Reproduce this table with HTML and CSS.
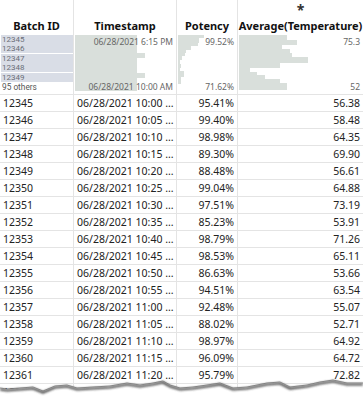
FILE: index.html
```html
<!DOCTYPE html>
<html>
<head>
<meta charset="utf-8">
<link rel="stylesheet" href="styles.css">
</head>
<body>
<div class="table">
  <div class="row head">
    <div class="cell"><span class="title">Batch ID</span></div>
    <div class="cell"><span class="title">Timestamp</span></div>
    <div class="cell"><span class="title">Potency</span></div>
    <div class="cell stack"><span class="star">*</span><span class="title">Average(Temperature)</span></div>
  </div>
  <div class="row summary">
    <div class="cell sum">
      <div class="cats">
        <div class="cat">12345</div>
        <div class="cat">12346</div>
        <div class="cat">12347</div>
        <div class="cat">12348</div>
        <div class="cat">12349</div>
        <div class="cat other">95 others</div>
      </div>
    </div>
    <div class="cell sum">
      <div class="bars">
        <div class="bar" style="height:18px;width:62px"></div>
        <div class="bar" style="height:5px;width:70px"></div>
        <div class="bar" style="height:15px;width:62px"></div>
        <div class="bar" style="height:5px;width:70px"></div>
        <div class="bar" style="height:13px;width:62px"></div>
      </div>
      <span class="lbl top">06/28/2021 6:15 PM</span>
      <span class="lbl bottom">06/28/2021 10:00 AM</span>
    </div>
    <div class="cell sum">
      <div class="bars">
        <div class="bar" style="height:3px;width:26px"></div>
        <div class="bar" style="height:5px;width:21px"></div>
        <div class="bar" style="height:3px;width:20px"></div>
        <div class="bar" style="height:4px;width:13px"></div>
        <div class="bar" style="height:3px;width:8px"></div>
        <div class="bar" style="height:3px;width:7px"></div>
        <div class="bar" style="height:4px;width:4px"></div>
        <div class="bar" style="height:4px;width:2px"></div>
        <div class="bar" style="height:4px;width:3px"></div>
        <div class="bar" style="height:3px;width:2px"></div>
        <div class="bar" style="height:6px;width:6px"></div>
        <div class="bar" style="height:7px;width:3px"></div>
      </div>
      <span class="lbl top">99.52%</span>
      <span class="lbl bottom">71.62%</span>
    </div>
    <div class="cell sum">
      <div class="bars">
        <div class="bar" style="height:5px;width:48px"></div>
        <div class="bar" style="height:5px;width:58px"></div>
        <div class="bar" style="height:4px;width:43px"></div>
        <div class="bar" style="height:4px;width:51px"></div>
        <div class="bar" style="height:4px;width:53px"></div>
        <div class="bar" style="height:6px;width:69px"></div>
        <div class="bar" style="height:5px;width:41px"></div>
        <div class="bar" style="height:4px;width:11px"></div>
        <div class="bar" style="height:3px;width:18px"></div>
        <div class="bar" style="height:4px;width:26px"></div>
        <div class="bar" style="height:4px;width:41px"></div>
        <div class="bar" style="height:7px;width:48px"></div>
      </div>
      <span class="lbl top">75.3</span>
      <span class="lbl bottom">52</span>
    </div>
  </div>

  <div class="row"><div class="cell id">12345</div><div class="cell ts">06/28/2021 10:00 ...</div><div class="cell num">95.41%</div><div class="cell num">56.38</div></div>
  <div class="row"><div class="cell id">12346</div><div class="cell ts">06/28/2021 10:05 ...</div><div class="cell num">99.40%</div><div class="cell num">58.48</div></div>
  <div class="row"><div class="cell id">12347</div><div class="cell ts">06/28/2021 10:10 ...</div><div class="cell num">98.98%</div><div class="cell num">64.35</div></div>
  <div class="row"><div class="cell id">12348</div><div class="cell ts">06/28/2021 10:15 ...</div><div class="cell num">89.30%</div><div class="cell num">69.90</div></div>
  <div class="row"><div class="cell id">12349</div><div class="cell ts">06/28/2021 10:20 ...</div><div class="cell num">88.48%</div><div class="cell num">56.61</div></div>
  <div class="row"><div class="cell id">12350</div><div class="cell ts">06/28/2021 10:25 ...</div><div class="cell num">99.04%</div><div class="cell num">64.88</div></div>
  <div class="row"><div class="cell id">12351</div><div class="cell ts">06/28/2021 10:30 ...</div><div class="cell num">97.51%</div><div class="cell num">73.19</div></div>
  <div class="row"><div class="cell id">12352</div><div class="cell ts">06/28/2021 10:35 ...</div><div class="cell num">85.23%</div><div class="cell num">53.91</div></div>
  <div class="row"><div class="cell id">12353</div><div class="cell ts">06/28/2021 10:40 ...</div><div class="cell num">98.79%</div><div class="cell num">71.26</div></div>
  <div class="row"><div class="cell id">12354</div><div class="cell ts">06/28/2021 10:45 ...</div><div class="cell num">98.53%</div><div class="cell num">65.11</div></div>
  <div class="row"><div class="cell id">12355</div><div class="cell ts">06/28/2021 10:50 ...</div><div class="cell num">86.63%</div><div class="cell num">53.66</div></div>
  <div class="row"><div class="cell id">12356</div><div class="cell ts">06/28/2021 10:55 ...</div><div class="cell num">94.51%</div><div class="cell num">63.54</div></div>
  <div class="row"><div class="cell id">12357</div><div class="cell ts">06/28/2021 11:00 ...</div><div class="cell num">92.48%</div><div class="cell num">55.07</div></div>
  <div class="row"><div class="cell id">12358</div><div class="cell ts">06/28/2021 11:05 ...</div><div class="cell num">88.02%</div><div class="cell num">52.71</div></div>
  <div class="row"><div class="cell id">12359</div><div class="cell ts">06/28/2021 11:10 ...</div><div class="cell num">98.97%</div><div class="cell num">64.92</div></div>
  <div class="row"><div class="cell id">12360</div><div class="cell ts">06/28/2021 11:15 ...</div><div class="cell num">96.09%</div><div class="cell num">64.72</div></div>
  <div class="row"><div class="cell id">12361</div><div class="cell ts">06/28/2021 11:20 ...</div><div class="cell num">95.79%</div><div class="cell num">72.82</div></div>
  <div class="row"><div class="cell id">12362</div><div class="cell ts">06/28/2021 11:25 ...</div><div class="cell num">97.12%</div><div class="cell num">61.40</div></div>
</div>

<svg class="tear" width="363" height="26" viewBox="0 0 363 26">
  <defs>
    <filter id="sh" x="-5%" y="-50%" width="110%" height="200%">
      <feGaussianBlur stdDeviation="0.9"/>
    </filter>
  </defs>
  <path d="M0 14 L7 15 L20 14 L33 13 L43 17 L55 12 L67 11 L77 14 L93 13 L110 12 L127 9 L140 11 L153 9 L163 7 L170 11 L180 14 L193 13 L207 11 L220 9 L233 14 L247 13 L267 9 L280 8 L290 13 L307 11 L320 8 L333 6 L347 9 L363 9 L363 26 L0 26 Z" fill="#fff"/>
  <path d="M0 15.5 L7 16.5 L20 15.5 L33 14.5 L43 18.5 L55 13.5 L67 12.5 L77 15.5 L93 14.5 L110 13.5 L127 10.5 L140 12.5 L153 10.5 L163 8.5 L170 12.5 L180 15.5 L193 14.5 L207 12.5 L220 10.5 L233 15.5 L247 14.5 L267 10.5 L280 9.5 L290 14.5 L307 12.5 L320 9.5 L333 7.5 L347 10.5 L363 10.5" fill="none" stroke="#444" stroke-width="2.2" filter="url(#sh)"/>
  <path d="M0 14 L7 15 L20 14 L33 13 L43 17 L55 12 L67 11 L77 14 L93 13 L110 12 L127 9 L140 11 L153 9 L163 7 L170 11 L180 14 L193 13 L207 11 L220 9 L233 14 L247 13 L267 9 L280 8 L290 13 L307 11 L320 8 L333 6 L347 9 L363 9" fill="none" stroke="#777" stroke-width="0.8"/>
</svg>
</body>
</html>
```

FILE: styles.css
```css
html, body {
  margin: 0;
  padding: 0;
  background: #fff;
}
body {
  width: 363px;
  height: 400px;
  overflow: hidden;
  position: relative;
  font-family: "Noto Sans", "Open Sans", sans-serif;
  color: #222;
}
.table {
  width: 363px;
}
.row {
  display: grid;
  grid-template-columns: 74px 103px 61px 125px;
  height: 17px;
  border-bottom: 1px solid #e4e4e4;
  box-sizing: border-box;
}
.cell {
  border-right: 1px solid #e4e4e4;
  box-sizing: border-box;
  font-size: 10.5px;
  line-height: 16px;
  white-space: nowrap;
  overflow: hidden;
}
.cell:last-child {
  border-right: none;
}
.id {
  padding-left: 3px;
}
.ts {
  padding-left: 3px;
}
.num {
  text-align: right;
  padding-right: 3px;
}
.head {
  height: 33px;
  border-bottom: none;
}
.head .cell {
  display: flex;
  flex-direction: column;
  justify-content: flex-end;
  align-items: center;
  padding-bottom: 1px;
}
.title {
  font-weight: 700;
  font-size: 11px;
  line-height: 13px;
  color: #111;
}
.star {
  font-weight: 700;
  font-size: 14px;
  line-height: 10px;
  margin-bottom: 4px;
  color: #333;
}
.summary {
  height: 62px;
}
.sum {
  position: relative;
  padding: 2px 1px 0 1px;
}
.cats {
  display: flex;
  flex-direction: column;
  gap: 0.4px;
}
.cat {
  height: 9px;
  width: 71px;
  background: #d9dde6;
  font-family: Roboto, "Noto Sans", sans-serif;
  font-size: 8px;
  line-height: 9px;
  color: #6a6e78;
  padding-left: 1px;
}
.cat.other {
  height: 10px;
  background: none;
  color: #555;
  line-height: 10px;
  font-size: 8.3px;
}
.bars {
  display: flex;
  flex-direction: column;
}
.bar {
  background: #d9dfdb;
}
.lbl {
  position: absolute;
  right: 3px;
  font-size: 8.5px;
  line-height: 10px;
  color: #666;
}
.lbl.top {
  top: 4px;
}
.lbl.bottom {
  bottom: 2px;
}
.tear {
  position: absolute;
  left: 0;
  top: 374px;
  display: block;
}
```
